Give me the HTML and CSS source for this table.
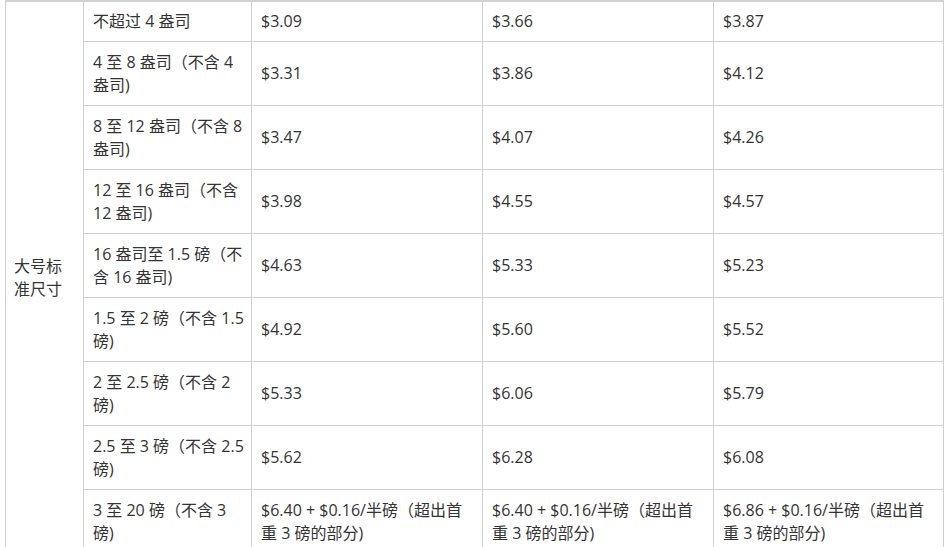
FILE: index.html
```html
<!DOCTYPE html>
<html lang="zh-CN">
<head>
<meta charset="utf-8">
<link rel="stylesheet" href="styles.css">
</head>
<body>
<table class="fees">
  <colgroup>
    <col class="c-size"><col class="c-weight"><col class="c-price"><col class="c-price"><col class="c-last">
  </colgroup>
  <tbody>
    <tr class="row-first">
      <td class="size" rowspan="9">大号标<br>准尺寸</td>
      <td>不超过 4 盎司</td><td>$3.09</td><td>$3.66</td><td>$3.87</td>
    </tr>
    <tr><td>4 至 8 盎司（不含 4<br>盎司)</td><td>$3.31</td><td>$3.86</td><td>$4.12</td></tr>
    <tr><td>8 至 12 盎司（不含 8<br>盎司)</td><td>$3.47</td><td>$4.07</td><td>$4.26</td></tr>
    <tr><td>12 至 16 盎司（不含<br>12 盎司)</td><td>$3.98</td><td>$4.55</td><td>$4.57</td></tr>
    <tr><td>16 盎司至 1.5 磅（不<br>含 16 盎司)</td><td>$4.63</td><td>$5.33</td><td>$5.23</td></tr>
    <tr><td>1.5 至 2 磅（不含 1.5<br>磅)</td><td>$4.92</td><td>$5.60</td><td>$5.52</td></tr>
    <tr><td>2 至 2.5 磅（不含 2<br>磅)</td><td>$5.33</td><td>$6.06</td><td>$5.79</td></tr>
    <tr><td>2.5 至 3 磅（不含 2.5<br>磅)</td><td>$5.62</td><td>$6.28</td><td>$6.08</td></tr>
    <tr><td>3 至 20 磅（不含 3<br>磅)</td><td>$6.40 + $0.16/半磅（超出首<br>重 3 磅的部分)</td><td>$6.40 + $0.16/半磅（超出首<br>重 3 磅的部分)</td><td>$6.86 + $0.16/半磅（超出首<br>重 3 磅的部分)</td></tr>
  </tbody>
</table>
</body>
</html>
```
FILE: styles.css
```css
html, body {
  margin: 0;
  padding: 0;
  background: #ffffff;
}
body {
  padding-left: 5px;
  font-family: "Open Sans", "Noto Sans CJK SC", sans-serif;
  font-size: 16px;
  color: #333333;
}
.fees {
  border-collapse: collapse;
  table-layout: fixed;
  width: 938px;
  border-top: 2px solid #d2d2d2;
}
.c-size { width: 78px; }
.c-weight { width: 168px; }
.c-price { width: 231px; }
.c-last { width: 230px; }
.fees td {
  border: 1px solid #cfcfcf;
  padding: 8px 6px 8px 9px;
  line-height: 23px;
  vertical-align: middle;
  text-align: left;
  white-space: nowrap;
  overflow: hidden;
}
.fees tr { height: 64px; }
.fees tr.row-first { height: 39px; }
.fees td.size {
  padding-left: 8px;
}
```
